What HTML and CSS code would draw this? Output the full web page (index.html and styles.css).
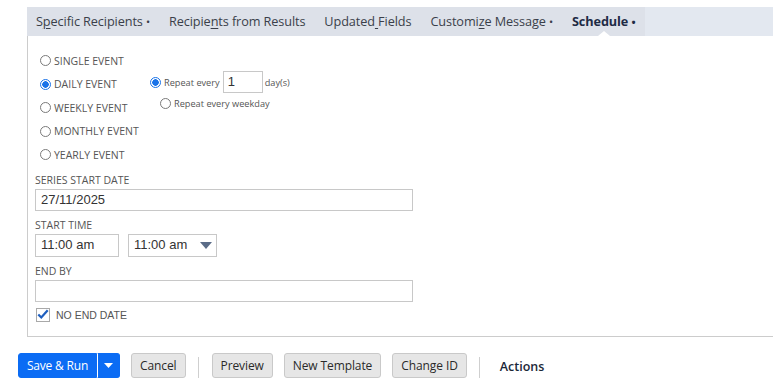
FILE: index.html
```html
<!DOCTYPE html>
<html lang="en">
<head>
    <meta charset="UTF-8">
    <meta name="viewport" content="width=device-width, initial-scale=1.0">
    <title>Schedule</title>
    <link rel="stylesheet" href="styles.css">
</head>
<body>

    <div class="wizard">
        <div class="tabs">
            <div class="tab">S<u>p</u>ecific Recipients <span class="dot">&bull;</span></div>
            <div class="tab">Recipie<u>n</u>ts from Results</div>
            <div class="tab">Updated<u> </u>Fields</div>
            <div class="tab">Customi<u>z</u>e Message <span class="dot">&bull;</span></div>
            <div class="tab active">Schedule <span class="dot">&bull;</span><span class="notch"></span></div>
        </div>

        <div class="panel">
            <div class="events">
                <div class="event-list">
                    <label class="radio-row"><span class="radio"></span>SINGLE EVENT</label>
                    <label class="radio-row"><span class="radio checked"></span>DAILY EVENT</label>
                    <label class="radio-row"><span class="radio"></span>WEEKLY EVENT</label>
                    <label class="radio-row"><span class="radio"></span>MONTHLY EVENT</label>
                    <label class="radio-row"><span class="radio"></span>YEARLY EVENT</label>
                </div>
                <div class="repeat">
                    <div class="repeat-row">
                        <span class="radio checked"></span>
                        <span>Repeat every</span>
                        <span class="repeat-input">1</span>
                        <span class="unit">day(s)</span>
                    </div>
                    <div class="repeat-row weekday">
                        <span class="radio"></span>
                        <span>Repeat every weekday</span>
                    </div>
                </div>
            </div>

            <div class="field">
                <div class="field-label">SERIES START DATE</div>
                <div class="text-input wide">27/11/2025</div>
            </div>

            <div class="field">
                <div class="field-label">START TIME</div>
                <div class="time-row">
                    <div class="text-input time">11:00 am</div>
                    <div class="text-input select">
                        <span>11:00 am</span>
                        <svg width="12" height="7" viewBox="0 0 12 7"><path d="M0 0h12L6 7z" fill="#5b6c88"/></svg>
                    </div>
                </div>
            </div>

            <div class="field">
                <div class="field-label">END BY</div>
                <div class="text-input wide"></div>
            </div>

            <label class="check-row">
                <span class="checkbox">
                    <svg width="14" height="12" viewBox="0 0 14 12"><path d="M1.5 6.5l3.5 3.5 7.5-8.5" fill="none" stroke="#1f5fbf" stroke-width="2.6"/></svg>
                </span>
                NO END DATE
            </label>
        </div>
    </div>

    <div class="button-bar">
        <div class="split-button">
            <button class="btn primary">Save &amp; Run</button>
            <button class="btn primary caret">
                <svg width="9" height="5" viewBox="0 0 9 5"><path d="M0 0h9L4.5 5z" fill="#fff"/></svg>
            </button>
        </div>
        <button class="btn">Cancel</button>
        <span class="divider"></span>
        <button class="btn">Preview</button>
        <button class="btn">New Template</button>
        <button class="btn">Change ID</button>
        <span class="divider"></span>
        <span class="actions">Actions</span>
    </div>

</body>
</html>
```

FILE: styles.css
```css
body {
    margin: 0;
    background: #ffffff;
    font-family: 'Open Sans', 'Noto Sans', sans-serif;
    color: #333333;
}
.wizard {
    margin-left: 27px;
    padding-top: 7px;
}
.tabs {
    display: flex;
    height: 29px;
    background: #e3e8f0;
}
.tab {
    position: relative;
    padding: 0 9.5px;
    line-height: 29px;
    font-size: 12.7px;
    letter-spacing: -0.1px;
    color: #3a3f4a;
    background: #dde1e9;
    white-space: pre;
}
.tab:first-child {
    padding-left: 9px;
}
.tab u {
    text-decoration: underline;
    text-underline-offset: 2px;
}
.tab .dot {
    font-size: 11px;
}
.tab.active {
    font-weight: 700;
    color: #1e2b45;
}
.notch {
    position: absolute;
    left: 50%;
    bottom: 0;
    margin-left: -6px;
    width: 0;
    height: 0;
    border-left: 6px solid transparent;
    border-right: 6px solid transparent;
    border-bottom: 5px solid #ffffff;
}
.panel {
    border-left: 1px solid #cccccc;
    border-bottom: 1px solid #cccccc;
    padding: 13px 0 14px 7px;
}
.events {
    display: flex;
    padding-left: 5px;
}
.event-list {
    display: flex;
    flex-direction: column;
    width: 110px;
}
.radio-row {
    display: flex;
    align-items: center;
    gap: 3px;
    height: 23.5px;
    font-size: 10.5px;
    color: #555555;
}
.radio {
    width: 11px;
    height: 11px;
    box-sizing: border-box;
    border: 1px solid #7a7a7a;
    border-radius: 50%;
    background: #ffffff;
    flex-shrink: 0;
}
.radio.checked {
    border-color: #1a73e8;
    background: radial-gradient(circle, #1a73e8 0 3px, #ffffff 3.5px);
}
.repeat {
    display: flex;
    flex-direction: column;
    margin-top: 22px;
}
.repeat-row {
    display: flex;
    align-items: center;
    gap: 2px;
    height: 22px;
    font-size: 9.2px;
    color: #555555;
}
.repeat-row .radio {
    margin-right: 1px;
}
.repeat-row.weekday {
    padding-left: 10px;
    height: 20px;
}
.repeat-input {
    width: 40px;
    height: 22px;
    box-sizing: border-box;
    border: 1px solid #c8c8c8;
    padding: 2px 4px;
    font-family: 'Liberation Sans', Arial, sans-serif;
    font-size: 13px;
    color: #333333;
    margin-left: 1px;
}
.field {
    margin-top: 6px;
}
.field + .field {
    margin-top: 7px;
}
.field-label {
    font-size: 10.5px;
    line-height: 14px;
    color: #555555;
    margin-bottom: 2px;
}
.text-input {
    height: 22px;
    box-sizing: border-box;
    border: 1px solid #c8c8c8;
    padding: 0 5px;
    font-family: 'Liberation Sans', Arial, sans-serif;
    font-size: 13px;
    line-height: 20px;
    color: #333333;
    background: #ffffff;
}
.wide {
    width: 378px;
}
.time-row {
    display: flex;
    gap: 9px;
}
.time {
    width: 84px;
    height: 23px;
}
.select {
    width: 89px;
    height: 23px;
    display: flex;
    align-items: center;
    justify-content: space-between;
    padding-right: 4px;
}
.check-row {
    display: flex;
    align-items: center;
    gap: 6px;
    margin-top: 6px;
    font-family: 'Liberation Sans', Arial, sans-serif;
    font-size: 10.5px;
    color: #555555;
}
.checkbox {
    width: 14px;
    height: 14px;
    box-sizing: border-box;
    border: 1px solid #a9a9a9;
    display: flex;
    align-items: flex-end;
    justify-content: center;
    margin-left: 1px;
}
.checkbox svg {
    margin-bottom: 1px;
}
.button-bar {
    display: flex;
    align-items: center;
    gap: 11px;
    margin: 16px 0 0 18px;
}
.btn {
    height: 25px;
    padding: 0 8px;
    border: 1px solid #c9c9c9;
    border-radius: 3px;
    background: #e6e6e6;
    font-family: 'Open Sans', 'Noto Sans', sans-serif;
    font-size: 12px;
    letter-spacing: -0.1px;
    color: #2a2a2a;
    white-space: nowrap;
}
.split-button {
    display: flex;
}
.btn.primary {
    background: #0b6cf4;
    border-color: #0b6cf4;
    color: #ffffff;
    width: 79px;
    padding: 0;
    letter-spacing: -0.2px;
    border-radius: 3px 0 0 3px;
}
.btn.caret {
    width: 23px;
    padding: 0;
    border-left: 1px solid #ffffff;
    border-radius: 0 3px 3px 0;
    display: flex;
    align-items: center;
    justify-content: center;
}
.divider {
    width: 1px;
    height: 21px;
    background: #cfcfcf;
    margin: 4px 2px 0 1px;
}
.actions {
    font-size: 12.5px;
    font-weight: 600;
    color: #1b2738;
    margin: 3px 0 0 7px;
}
```
